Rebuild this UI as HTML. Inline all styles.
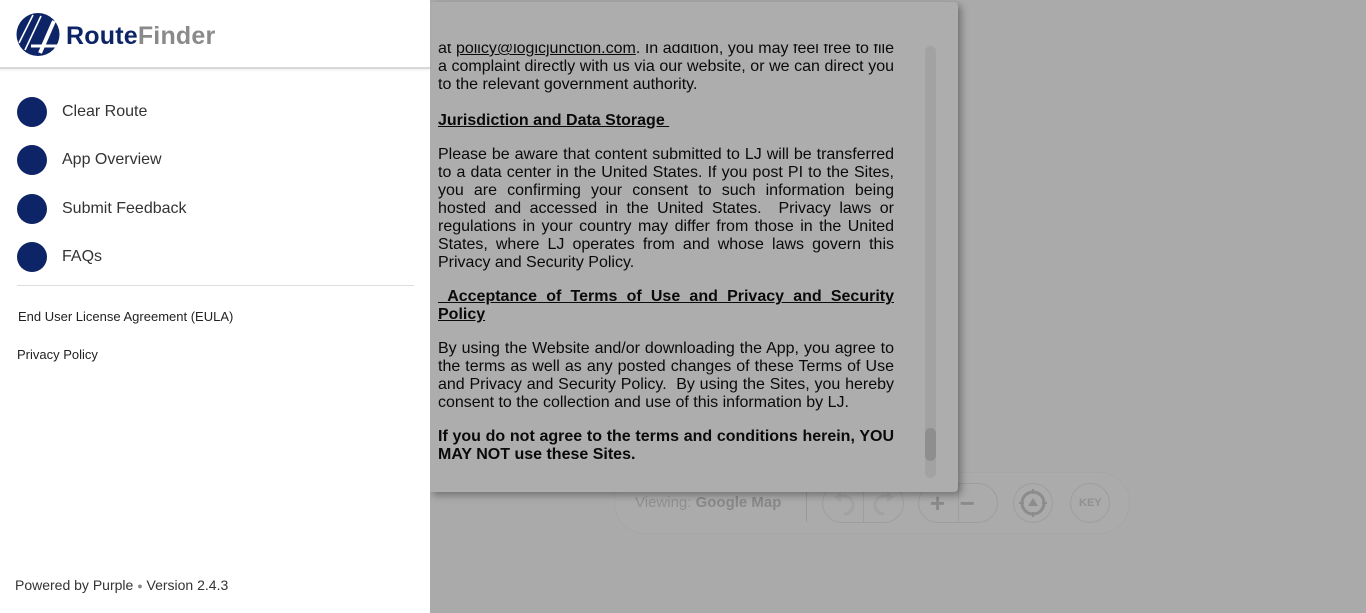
<!DOCTYPE html>
<html><head><meta charset="utf-8"><style>
*{margin:0;padding:0;box-sizing:border-box}
body{width:1366px;height:613px;overflow:hidden;background:#aaaaaa;font-family:"Liberation Sans",Arial,sans-serif;position:relative}
.side{position:absolute;left:0;top:0;width:430px;height:613px;background:#fff}
.hdr{height:69px;border-bottom:2px solid #d8d8d8;box-shadow:0 1px 2px rgba(0,0,0,.08);position:relative}
.logo{position:absolute;left:16px;top:13px}
.brand{position:absolute;left:66px;top:22px;font-size:25px;font-weight:bold;letter-spacing:.2px}
.item{position:absolute;left:17px;height:30px;display:flex;align-items:center}
.dot{width:30px;height:30px;border-radius:50%;background:#0d2466;margin-right:15px}
.item span{font-size:16px;color:#333}
.sm{position:absolute;font-size:13px;color:#222}
.modal{position:absolute;left:430px;top:2px;width:528px;height:490px;background:#adadad;border-radius:0 4px 4px 0;box-shadow:3px 3px 8px rgba(0,0,0,.35)}
.txt{position:absolute;left:438px;width:456px;font-size:16px;line-height:18px;color:#0a0a0a}
.txt div{text-align:justify;text-align-last:justify;white-space:nowrap;overflow:visible}
.txt div.l{text-align-last:left}
.b{font-weight:bold}
.u{text-decoration:underline}
.track{position:absolute;left:925px;top:46px;width:11px;height:432px;background:#a2a2a2;border-radius:6px}
.thumb{position:absolute;left:925px;top:428px;width:11px;height:33px;background:#8e8e8e;border-radius:6px}
.bar{position:absolute;left:614px;top:472px;width:516px;height:62px;border-radius:31px;border:1px solid #a6a6a6;background:#ababab}
.btn{position:absolute;border:1px solid #9e9e9e;border-radius:22px;height:40px;top:483px}
</style></head><body>
<div class="bar"></div>
<div style="position:absolute;left:635px;top:494px;font-size:15px;color:#8f8f8f">Viewing: <b style="color:#888">Google Map</b></div>
<div style="position:absolute;left:806px;top:490px;width:1px;height:32px;background:#999"></div>
<div class="btn" style="left:822px;width:82px"></div><div style="position:absolute;left:863px;top:484px;width:1px;height:38px;background:#9e9e9e"></div>
<svg style="position:absolute;left:826px;top:488px" width="76" height="32"><path d="M14 9a9 9 0 1 1 4 17" fill="none" stroke="#a2a2a2" stroke-width="3"/><path d="M8 9l7-5v10z" fill="#a2a2a2"/><path d="M62 9a9 9 0 1 0 -4 17" fill="none" stroke="#a2a2a2" stroke-width="3"/><path d="M68 9l-7-5v10z" fill="#a2a2a2"/></svg>
<div class="btn" style="left:918px;width:80px"></div><div style="position:absolute;left:958px;top:484px;width:1px;height:38px;background:#9e9e9e"></div>
<div style="position:absolute;left:930px;top:488px;font-size:26px;font-weight:bold;color:#8a8a8a">+ &nbsp;−</div>
<div class="btn" style="left:1013px;width:40px;border-radius:50%"></div>
<svg style="position:absolute;left:1016px;top:486px" width="34" height="34"><circle cx="17" cy="17" r="11" fill="none" stroke="#8c8c8c" stroke-width="3"/><path d="M17 3v5M17 26v5M3 17h5M26 17h5" stroke="#8c8c8c" stroke-width="2"/><path d="M12 20l5-8 5 8z" fill="#8c8c8c"/></svg>
<div class="btn" style="left:1070px;width:40px;border-radius:50%"></div>
<div style="position:absolute;left:1079px;top:497px;font-size:11px;font-weight:bold;color:#909090">KEY</div>

<div class="modal"></div>
<div style="position:absolute;left:430px;top:44px;width:528px;height:440px;overflow:hidden">
<div class="txt" style="left:8px;top:-4px">
<div>at <span class="u">policy@logicjunction.com</span>. In addition, you may feel free to file</div>
<div>a complaint directly with us via our website, or we can direct you</div>
<div class="l">to the relevant government authority.</div>
</div></div>
<div class="txt" style="top:112px"><div class="l b u">Jurisdiction and Data Storage&nbsp;</div></div>
<div class="txt" style="top:146px">
<div>Please be aware that content submitted to LJ will be transferred</div>
<div>to a data center in the United States. If you post PI to the Sites,</div>
<div>you are confirming your consent to such information being</div>
<div>hosted and accessed in the United States.&nbsp; Privacy laws or</div>
<div>regulations in your country may differ from those in the United</div>
<div>States, where LJ operates from and whose laws govern this</div>
<div class="l">Privacy and Security Policy.</div>
</div>
<div class="txt b u" style="top:288px">
<div>&nbsp;Acceptance of Terms of Use and Privacy and Security</div>
<div class="l">Policy</div>
</div>
<div class="txt" style="top:340px">
<div>By using the Website and/or downloading the App, you agree to</div>
<div>the terms as well as any posted changes of these Terms of Use</div>
<div>and Privacy and Security Policy.&nbsp; By using the Sites, you hereby</div>
<div class="l">consent to the collection and use of this information by LJ.</div>
</div>
<div class="txt b" style="top:428px">
<div>If you do not agree to the terms and conditions herein, YOU</div>
<div class="l">MAY NOT use these Sites.</div>
</div>
<div class="track"></div><div class="thumb"></div>

<div class="side">
<div class="hdr">
<svg class="logo" width="45" height="43" viewBox="0 0 45 43"><circle cx="22" cy="21.5" r="21.5" fill="#0d2466"/><path d="M3 30L17 2M9 37L25 3" stroke="#fff" stroke-width="1.6"/><path d="M24 40L38 8" stroke="#fff" stroke-width="4"/><path d="M15 33h26" stroke="#fff" stroke-width="3"/></svg>
<div class="brand"><span style="color:#0d2466">Route</span><span style="color:#8a8a8a">Finder</span></div>
</div>
<div class="item" style="top:97px"><div class="dot"></div><span>Clear Route</span></div>
<div class="item" style="top:145px"><div class="dot"></div><span>App Overview</span></div>
<div class="item" style="top:194px"><div class="dot"></div><span>Submit Feedback</span></div>
<div class="item" style="top:242px"><div class="dot"></div><span>FAQs</span></div>
<div style="position:absolute;left:17px;top:285px;width:397px;height:1px;background:#ddd"></div>
<div class="sm" style="left:18px;top:309px">End User License Agreement (EULA)</div>
<div class="sm" style="left:17px;top:347px">Privacy Policy</div>
<div class="sm" style="left:15px;top:577px;font-size:14px;color:#333">Powered by Purple <span style="font-size:9px;color:#888;vertical-align:1px">●</span> Version 2.4.3</div>
</div>
</body></html>
